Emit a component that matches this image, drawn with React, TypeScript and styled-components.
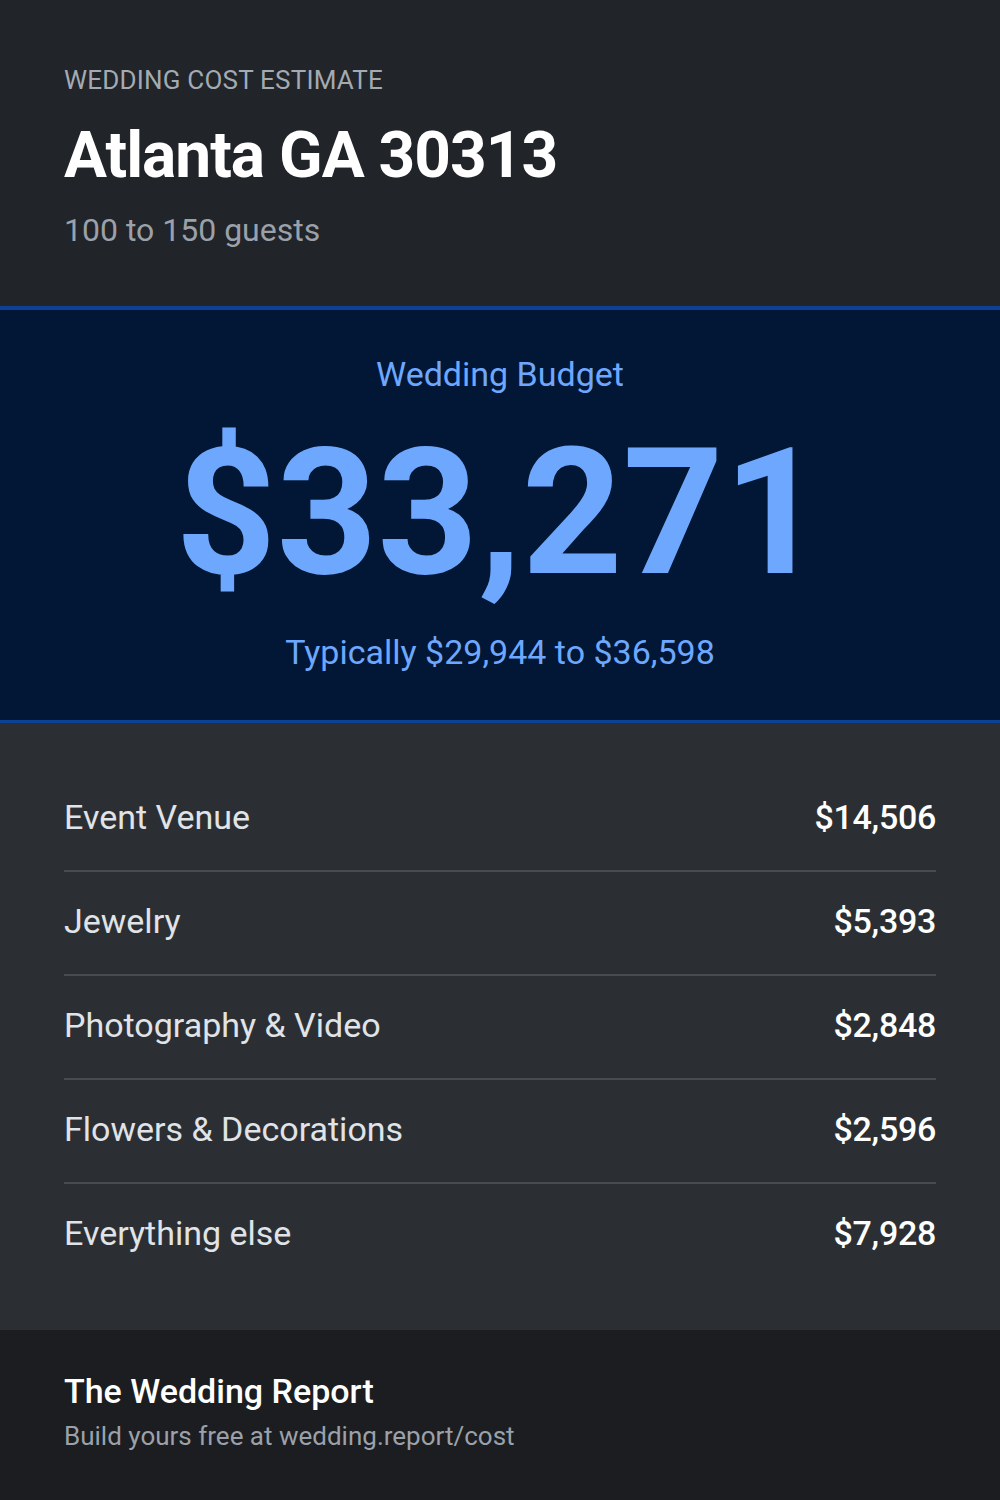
import styled, { createGlobalStyle } from "styled-components";

const GlobalStyle = createGlobalStyle`
  body {
    margin: 0;
    background: #1b1d20;
    font-family: Roboto, "Liberation Sans", Arial, sans-serif;
  }
`;

const Card = styled.div`
  width: 1000px;
  display: flex;
  flex-direction: column;
`;

const Header = styled.header`
  background: #212428;
  padding: 64px 64px 56px;
  display: flex;
  flex-direction: column;
`;

const Eyebrow = styled.div`
  font-size: 26px;
  line-height: 32px;
  letter-spacing: 0.2px;
  color: #a4aab2;
  text-transform: uppercase;
  margin-bottom: 22px;
`;

const City = styled.h1`
  margin: 0 0 16px;
  font-size: 64px;
  line-height: 76px;
  font-weight: 700;
  letter-spacing: -1px;
  color: #ffffff;
`;

const Guests = styled.div`
  font-size: 32px;
  line-height: 40px;
  color: #9ba1aa;
`;

const Budget = styled.section`
  background: #021735;
  border-top: 4px solid #0c4196;
  border-bottom: 3px solid #0c4196;
  padding: 44px 64px 48px;
  display: flex;
  flex-direction: column;
  align-items: center;
  color: #6ea8fe;
`;

const BudgetLabel = styled.div`
  font-size: 34px;
  line-height: 40px;
  margin-bottom: 31px;
`;

const Total = styled.div`
  font-size: 176px;
  line-height: 176px;
  font-weight: 700;
  margin-bottom: 31px;
`;

const Range = styled.div`
  font-size: 34px;
  line-height: 40px;
`;

const List = styled.section`
  background: #2b2f33;
  padding: 45px 64px 44px;
  display: flex;
  flex-direction: column;
`;

const Row = styled.div<{ $last?: boolean }>`
  height: 98px;
  padding-bottom: 4px;
  display: flex;
  align-items: center;
  justify-content: space-between;
  border-bottom: ${(p) => (p.$last ? "none" : "2px solid #474b52")};
`;

const Label = styled.span`
  font-size: 34px;
  color: #e0e3e7;
`;

const Amount = styled.span`
  font-size: 34px;
  font-weight: 500;
  letter-spacing: -0.3px;
  color: #ffffff;
`;

const Footer = styled.footer`
  background: #1b1d20;
  padding: 41px 64px 48px;
  display: flex;
  flex-direction: column;
  gap: 9px;
`;

const Brand = styled.div`
  font-size: 34px;
  line-height: 40px;
  font-weight: 500;
  color: #ffffff;
`;

const Link = styled.div`
  font-size: 26px;
  line-height: 32px;
  color: #9ba1aa;
`;

const items = [
  { label: "Event Venue", amount: "$14,506" },
  { label: "Jewelry", amount: "$5,393" },
  { label: "Photography & Video", amount: "$2,848" },
  { label: "Flowers & Decorations", amount: "$2,596" },
  { label: "Everything else", amount: "$7,928" },
];

export default function App() {
  return (
    <>
      <GlobalStyle />
      <Card>
        <Header>
          <Eyebrow>Wedding Cost Estimate</Eyebrow>
          <City>Atlanta GA 30313</City>
          <Guests>100 to 150 guests</Guests>
        </Header>
        <Budget>
          <BudgetLabel>Wedding Budget</BudgetLabel>
          <Total>$33,271</Total>
          <Range>Typically $29,944 to $36,598</Range>
        </Budget>
        <List>
          {items.map((item, i) => (
            <Row key={item.label} $last={i === items.length - 1}>
              <Label>{item.label}</Label>
              <Amount>{item.amount}</Amount>
            </Row>
          ))}
        </List>
        <Footer>
          <Brand>The Wedding Report</Brand>
          <Link>Build yours free at wedding.report/cost</Link>
        </Footer>
      </Card>
    </>
  );
}
